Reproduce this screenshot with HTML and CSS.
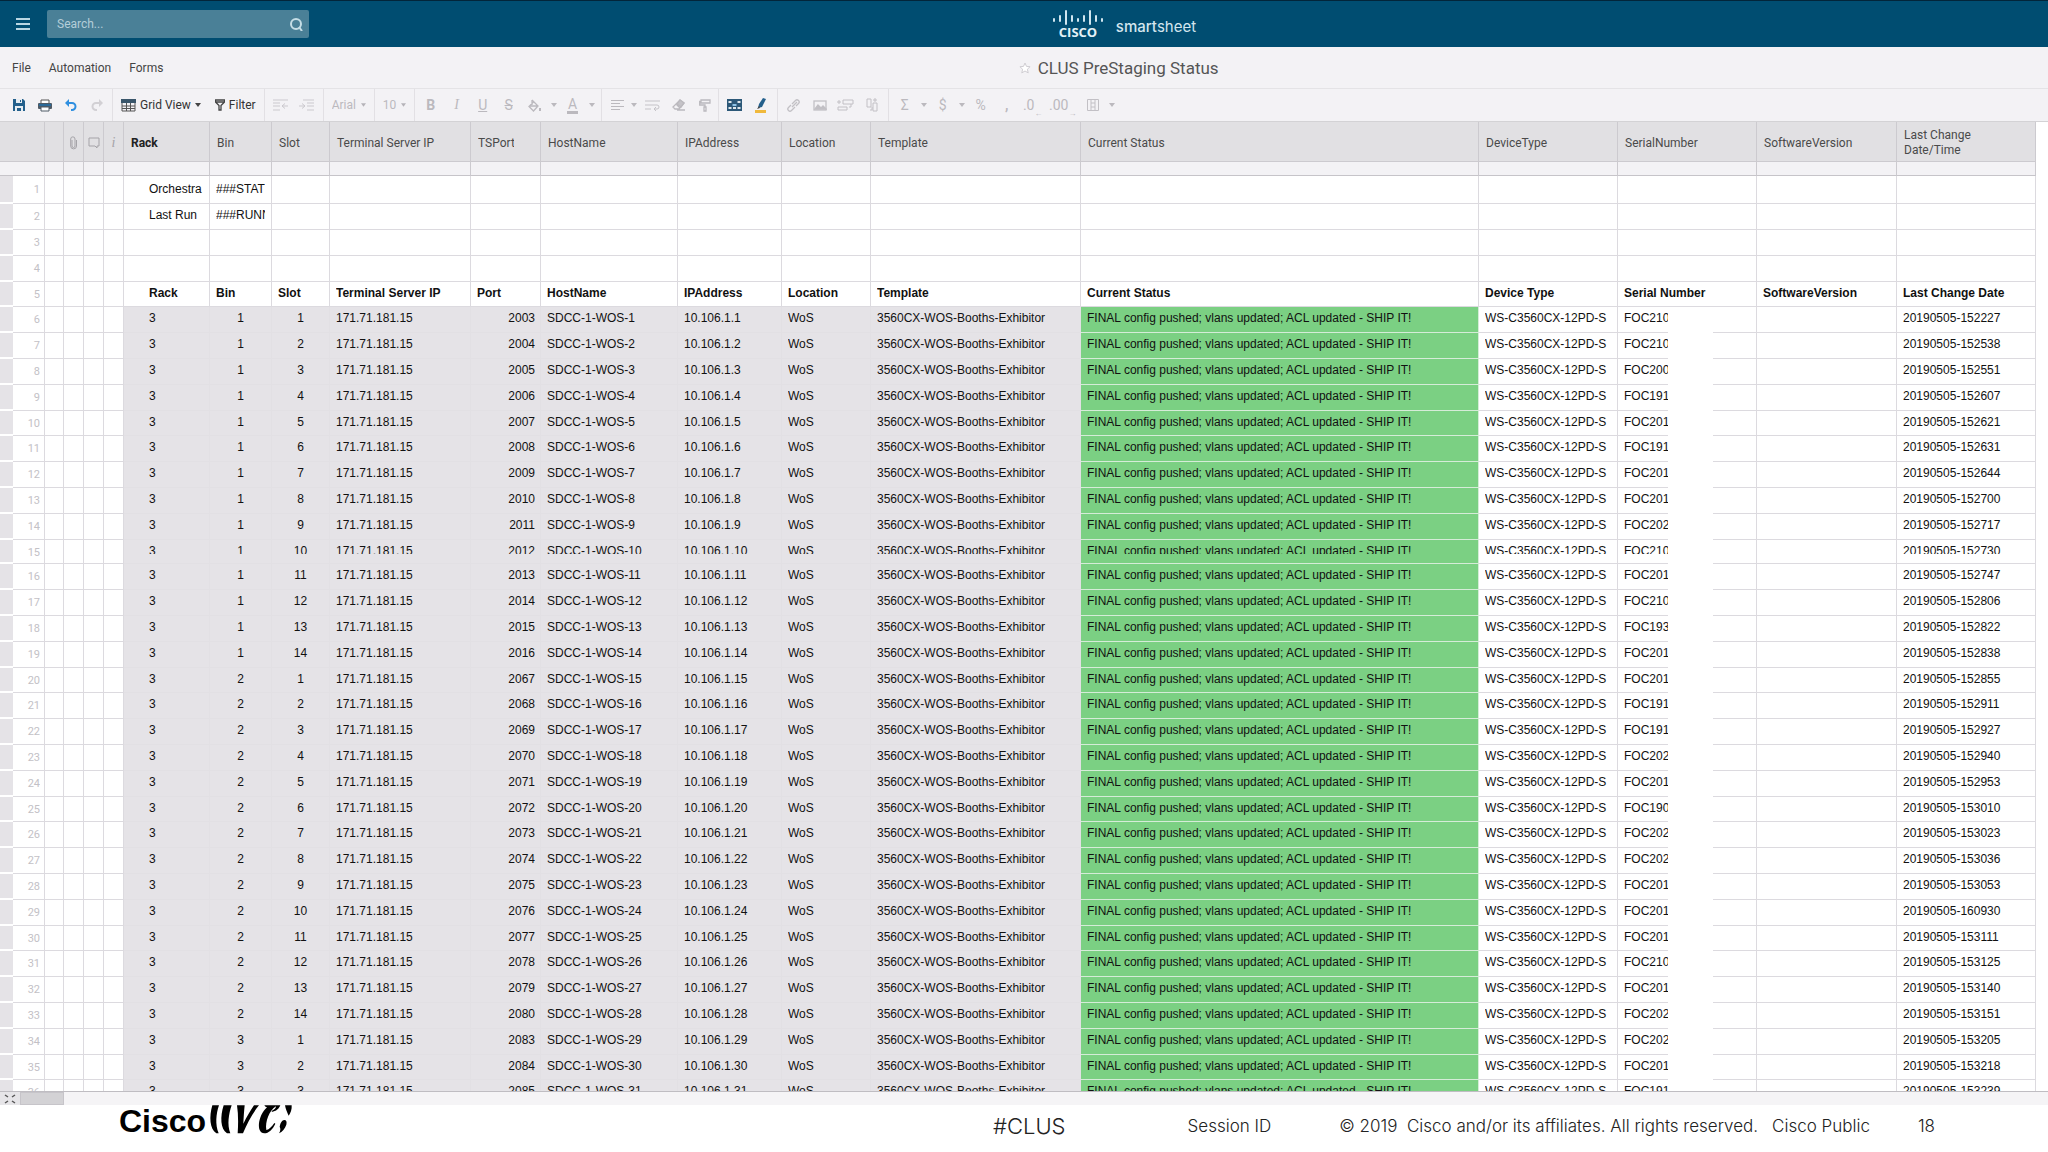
FILE: index.html
```
<!DOCTYPE html>
<html lang="en">
<head>
  <meta charset="UTF-8">
  <title>CLUS PreStaging Status</title>
  <meta name="viewport" content="width=device-width, initial-scale=1.0">
  <link rel="stylesheet" href="styles.css">
</head>
<body>
  <header class="topbar">
    <button class="menu-btn" aria-label="Menu">
      <svg width="14" height="12" viewBox="0 0 14 12"><path d="M0 1h14M0 6h14M0 11h14" stroke="#b9d6e2" stroke-width="2"/></svg>
    </button>
    <div class="search">
      <input type="text" placeholder="Search..." aria-label="Search">
      <svg width="13" height="13" viewBox="0 0 13 13" fill="none" stroke="#c5dde6" stroke-width="2"><circle cx="6" cy="6" r="5"/><path d="M9 9l3 4"/></svg>
    </div>
    <div class="brand">
      <svg class="cisco" width="50" height="30" viewBox="0 0 50 30">
        <g stroke="#cfe6f0" stroke-width="2" stroke-linecap="round">
          <path d="M1 10v2M7 7v5M13 2v13M19 7v5M25 10v2M31 7v5M37 2v13M43 7v5M49 10v2"/>
        </g>
        <text x="25" y="28" text-anchor="middle">CISCO</text>
      </svg>
      <span class="smart"><b>smart</b>sheet</span>
    </div>
  </header>

  <div class="titlebar">
    <nav class="menus">
      <a href="#">File</a>
      <a href="#">Automation</a>
      <a href="#">Forms</a>
    </nav>
    <h1>
      <svg width="12" height="12" viewBox="0 0 12 12" fill="#fff" stroke="#cfcdd2"><path d="M6 1l1.5 3.4 3.6.3-2.7 2.5.8 3.7L6 9 2.800 10.900l.8-3.700L.9 4.700l3.600-.3z"/></svg>
      CLUS PreStaging Status
    </h1>
  </div>

  <div class="toolbar">
    <div class="group first">
      <button class="tool" aria-label="Save"><svg width="12" height="12" viewBox="0 0 12 12"><path d="M0 0h10l2 2v10H0z" fill="#24608c"/><path d="M3 0h6v4H3zM2 7h8v5H2z" fill="#e8eef3"/><path d="M7 1h1v2H7zM4 9h4v3H4z" fill="#24608c"/></svg></button>
      <button class="tool" aria-label="Print"><svg width="14" height="13" viewBox="0 0 14 13"><path d="M3 4V1h8v3" fill="#fff" stroke="#555"/><rect y="4" width="14" height="6" rx="1" fill="#4f5b66"/><path d="M1 6h12" stroke="#2b6a99" stroke-width="2"/><path d="M3 8h8v4H3z" fill="#fff" stroke="#4f5b66"/></svg></button>
      <button class="tool" aria-label="Undo"><svg width="12" height="12" viewBox="0 0 12 12"><path d="M0 4l4-4v8z" fill="#2f8fe0"/><path d="M3 4h4a3 3 0 0 1 0 7H6" fill="none" stroke="#2f8fe0" stroke-width="2"/></svg></button>
      <button class="tool" aria-label="Redo"><svg width="12" height="12" viewBox="0 0 12 12"><path d="M12 4L8 0v8z" fill="#d2d0d4"/><path d="M9 4H5a3 3 0 0 0 0 7h1" fill="none" stroke="#d2d0d4" stroke-width="2"/></svg></button>
    </div>
    <div class="group padded">
      <button class="labelled">
        <svg width="15" height="13" viewBox="0 0 15 13"><path d="M1 4v8h13V4M1 7h13M1 9.500h13M5.500 3v9M9.500 3v9" fill="none" stroke="#555"/><path d="M0 0h15v4H0z" fill="#3a566b"/></svg>
        Grid View
        <svg width="6" height="4" viewBox="0 0 6 4"><path d="M0 0h6L3 4z" fill="#444"/></svg>
      </button>
      <button class="labelled">
        <svg width="10" height="12" viewBox="0 0 10 12"><path d="M.5 1h9v2L6 6.500V11H4V6.500L.5 3zM1 3h8" fill="none" stroke="#444" stroke-width="1.300"/></svg>
        Filter
      </button>
    </div>
    <div class="group">
      <button class="tool" aria-label="Outdent"><svg width="15" height="12" viewBox="0 0 15 12" stroke="#cbc9ce"><path d="M0 1h15M0 4h7M0 7h7M0 11h7M9 7h6M12 4.500L9 7l3 2.500" fill="none"/></svg></button>
      <button class="tool" aria-label="Indent"><svg width="15" height="12" viewBox="0 0 15 12" stroke="#cbc9ce"><path d="M4 1h11M8 4h7M8 7h7M8 11h7M0 7h6M3 4.500L6 7 3 9.500" fill="none"/></svg></button>
    </div>
    <div class="group padded">
      <label class="pick"><select class="font" aria-label="Font"><option>Arial</option></select><svg width="5" height="4" viewBox="0 0 6 4"><path d="M0 0h6L3 4z" fill="#b5b3b8"/></svg></label>
    </div>
    <div class="group padded">
      <label class="pick"><select class="size" aria-label="Font size"><option>10</option></select><svg width="5" height="4" viewBox="0 0 6 4"><path d="M0 0h6L3 4z" fill="#b5b3b8"/></svg></label>
    </div>
    <div class="group">
      <button class="tool"><b>B</b></button>
      <button class="tool"><i class="serif">I</i></button>
      <button class="tool"><u>U</u></button>
      <button class="tool"><s>S</s></button>
      <button class="tool" aria-label="Fill colour"><svg width="13" height="13" viewBox="0 0 13 13" fill="none" stroke="#bbb9be" stroke-width="1.300"><path d="M4 1l6 6-4.500 5L1 7.500 5.500 3M4 1v5M2 7h7"/><path d="M12 9v3" stroke-width="2"/></svg></button>
      <button class="drop" aria-label="Fill colours"></button>
      <button class="tool" aria-label="Text colour"><span class="textcolor">A</span></button>
      <button class="drop" aria-label="Text colours"></button>
    </div>
    <div class="group align">
      <button class="tool small" aria-label="Align"><svg width="13" height="11" viewBox="0 0 13 11" stroke="#bbb9be"><path d="M0 .5h13M0 3.500h9M0 6.500h13M0 9.500h9"/></svg></button>
      <button class="drop" aria-label="Alignments"></button>
      <button class="tool" aria-label="Wrap"><svg width="15" height="11" viewBox="0 0 15 11" fill="none" stroke="#c5c3c8"><path d="M0 1h15M0 5h12a2 2 0 0 1 0 4H9M11 7L9 9l2 2M0 9h6"/></svg></button>
      <button class="tool" aria-label="Clear formats"><svg width="13" height="12" viewBox="0 0 13 12" fill="none" stroke="#bbb9be" stroke-width="1.300"><path d="M8 1l4 3-5 6H3L1 8zM4 5l4 4M5 11h8"/><path d="M8 1l4 3-3 4-4-3z" fill="#c5c3c8"/></svg></button>
      <button class="tool" aria-label="Format painter"><svg width="12" height="13" viewBox="0 0 12 13" fill="none" stroke="#bbb9be" stroke-width="1.300"><path d="M2 1h9v3H2zM2 2.500H.7V6H6v2M5 8h2v4H5z"/></svg></button>
    </div>
    <div class="group">
      <button class="tool" aria-label="Highlight changes"><svg width="15" height="12" viewBox="0 0 15 12"><path d="M0 0h15v12H0z" fill="#2c5878"/><path d="M1.500 2h3v2h-3zM10.500 2h3v2h-3zM1.500 8h3v2h-3zM6 8h3v2H6zM10.500 8h3v2h-3z" fill="#dfe7ec"/><path d="M5.500 5h4v2h-4z" fill="#8fc3e6"/></svg></button>
      <button class="tool" aria-label="Highlighter"><svg width="13" height="16" viewBox="0 0 13 16"><path d="M9 1l3 1-4 8-4 1 1-4z" fill="#24608c"/><path d="M3 12l2-3 1 2z" fill="#444"/><path d="M1 13h11v3H1z" fill="#f0b93c"/></svg></button>
    </div>
    <div class="group">
      <button class="tool" aria-label="Link"><svg width="13" height="13" viewBox="0 0 13 13" fill="none" stroke="#c2c0c5" stroke-width="1.300"><path d="M5 8l5-5M4 6L1.500 8.500a2 2 0 0 0 3 3L8 8M5 5l3.500-3.500a2 2 0 0 1 3 3L9 7"/></svg></button>
      <button class="tool" aria-label="Image"><svg width="14" height="11" viewBox="0 0 14 11" fill="none" stroke="#c2c0c5" stroke-width="1.300"><rect x="1" y="1" width="12" height="9"/><path d="M2 9l3-4 3 3 2-2 3 3z" fill="#c2c0c5"/></svg></button>
      <button class="tool" aria-label="Insert row"><svg width="17" height="12" viewBox="0 0 17 12" fill="none" stroke="#c2c0c5"><path d="M6 1h10v4H6zM1 8h9v3H1zM0 3h4M2 1v4M12 8h2V5"/></svg></button>
      <button class="tool" aria-label="Insert column"><svg width="12" height="14" viewBox="0 0 12 14" fill="none" stroke="#c2c0c5"><path d="M1 1h4v8H1zM7 5h4v8H7zM9 0v4M7 2h4M4 12h2V9"/></svg></button>
    </div>
    <div class="group numbers">
      <button class="tool">Σ</button>
      <button class="drop" aria-label="Functions"></button>
      <button class="tool">$</button>
      <button class="drop" aria-label="Currencies"></button>
      <button class="tool">%</button>
      <button class="tool"><b>,</b></button>
      <button class="tool">.0<sub>←</sub></button>
      <button class="tool wide">.00<sub>→</sub></button>
      <button class="tool" aria-label="Columns"><svg width="12" height="12" viewBox="0 0 12 12" fill="none" stroke="#c2c0c5"><path d="M.5 .5h11v11H.5zM4 1v10M8 1v10M4 4h4M4 8h4"/></svg></button>
      <button class="drop" aria-label="Column options"></button>
    </div>
  </div>

  <main class="sheet">
    <table>
      <colgroup>
        <col class="c-grip"><col class="c-num"><col class="c-flag"><col class="c-icon"><col class="c-icon"><col class="c-icon">
        <col class="c-rack"><col class="c-bin"><col class="c-slot"><col class="c-ts"><col class="c-port"><col class="c-host">
        <col class="c-ip"><col class="c-loc"><col class="c-tmpl"><col><col class="c-dev"><col class="c-serial"><col class="c-soft"><col class="c-date">
      </colgroup>
      <thead>
        <tr class="names">
          <th colspan="2"></th>
          <th></th>
          <th class="icon"><svg width="7" height="14" viewBox="0 0 7 14" fill="none" stroke="#a5a3a8"><path d="M2 4v6a1.500 1.500 0 0 0 3 0V3a2 2 0 0 0-4.300 0v7a2.800 2.800 0 0 0 5.800 0V4"/></svg></th>
          <th class="icon"><svg width="12" height="12" viewBox="0 0 12 12" fill="none" stroke="#a5a3a8"><path d="M1 1h10v8H9v2L7 9H1z"/></svg></th>
          <th class="icon"><i>i</i></th>
          <th class="primary">Rack</th>
          <th>Bin</th>
          <th>Slot</th>
          <th>Terminal Server IP</th>
          <th class="tight"><span>TSPort</span></th>
          <th>HostName</th>
          <th>IPAddress</th>
          <th>Location</th>
          <th>Template</th>
          <th>Current Status</th>
          <th>DeviceType</th>
          <th>SerialNumber</th>
          <th>SoftwareVersion</th>
          <th>Last Change<br>Date/Time</th>
        </tr>
        <tr class="strip">
          <td colspan="2"></td><td></td><td></td><td></td><td></td><td></td><td></td><td></td><td></td><td></td><td></td><td></td><td></td><td></td><td></td><td></td><td></td><td></td><td></td>
        </tr>
      </thead>
      <tbody id="rows"></tbody>
    </table>
    <div class="redact"></div>
  </main>

  <div class="scroll">
    <button class="expand" aria-label="Expand"><svg width="12" height="10" viewBox="0 0 12 10" stroke="#555" stroke-width="1.500"><path d="M1 1l3 2M11 1L8 3M1 9l3-2M11 9L8 7"/></svg></button>
    <div class="thumb"></div>
  </div>

  <footer>
    <div class="live">
      <span>Cisco</span>
      <svg width="84" height="29" viewBox="298 45 252 87">
        <path d="M308 46h20c-9 26-12 58-1 84h-7c-20-12-22-50-12-84z"/>
        <path d="M342 46h24c-9 26-14 58-4 84h-10c-20-12-21-50-10-84z"/>
        <path d="M382 46h23c-2 20-3 36-4 55 10-20 22-40 32-55h15c-20 24-36 55-48 84h-16c2-30 2-58-2-84z"/>
        <path d="M464 46h48c-4 10-12 18-26 20l1-4c8-3 12-8 12-13-20 12-33 46-29 71 9-2 17-10 24-21l3 2c-8 17-20 29-33 29-25 0-20-53 8-78-3 0-6-2-8-6z"/>
        <path d="M526 46h20c1 12-3 24-9 31-5-10-9-20-11-31zM518 92c10-5 15 2 12 12-4 12-12 22-22 26 5-9 5-14 2-20 1-8 4-14 8-18z"/>
      </svg>
    </div>
    <span class="tag">#CLUS</span>
    <span class="session">Session ID</span>
    <span class="legal">© 2019&nbsp; Cisco and/or its affiliates. All rights reserved.</span>
    <span class="public">Cisco Public</span>
    <span class="page">18</span>
  </footer>

  <script src="script.js"></script>
</body>
</html>
```

FILE: styles.css
```
:root {
  --bar: #004d71;
  --panel: #f3f2f5;
  --head: #e1e0e3;
  --locked: #e5e3e7;
  --line: #dcdadf;
  --green: #7bd083;
}

* {
  box-sizing: border-box;
}

body {
  margin: 0;
  height: 100vh;
  display: flex;
  flex-direction: column;
  overflow: hidden;
  background: #fff;
  color: #111;
  font-family: Roboto, "Liberation Sans", sans-serif;
  font-size: 12px;
}

button, select, input {
  font: inherit;
  color: inherit;
  background: none;
  border: 0;
  padding: 0;
}

button {
  cursor: pointer;
}

svg {
  flex: none;
  display: block;
}

/* top bar */
.topbar {
  display: flex;
  align-items: center;
  height: 47px;
  flex: none;
  background: var(--bar);
  border-top: 1px solid #02253a;
  padding-left: 16px;
}

.menu-btn {
  margin-right: 17px;
}

.search {
  display: flex;
  align-items: center;
  width: 262px;
  height: 28px;
  padding: 0 6px 0 10px;
  background: #4a8097;
  border-radius: 2px;
}

.search input {
  flex: 1;
  min-width: 0;
  outline: none;
}

.search input::placeholder {
  color: #b4ced9;
  opacity: 1;
}

.brand {
  flex: 1;
  display: flex;
  align-items: center;
  justify-content: center;
  gap: 13px;
  padding-right: 108px;
}

.cisco text {
  font: bold 13px "Open Sans", sans-serif;
  fill: #e3f1f7;
}

.smart {
  color: #d3e6ef;
  font-family: Inter, sans-serif;
  font-size: 15px;
  padding-top: 5px;
}

.smart b {
  font-weight: 500;
}

/* title and menus */
.titlebar {
  display: flex;
  align-items: center;
  flex: none;
  height: 42px;
  background: var(--panel);
  border-bottom: 1px solid #e4e3e6;
  padding-left: 12px;
}

.menus {
  display: flex;
  gap: 18px;
}

.menus a {
  color: #444;
  text-decoration: none;
}

h1 {
  flex: 1;
  display: flex;
  align-items: center;
  justify-content: center;
  gap: 7px;
  margin: 0;
  padding-left: 26px;
  color: #555;
  font-size: 17px;
  font-weight: 400;
}

/* toolbar */
.toolbar {
  display: flex;
  flex: none;
  height: 33px;
  background: var(--panel);
  border-bottom: 1px solid #d3d2d5;
  color: #bbb9be;
}

.group {
  display: flex;
  align-items: center;
  padding: 0 3px;
  border-right: 1px solid #e2e0e4;
}

.group.first {
  padding: 0 2px 0 6px;
}

.group.padded {
  gap: 14px;
  padding: 0 8px;
}

.group.align {
  padding: 0 0 0 6px;
}

.group.numbers {
  border-right: 0;
}

.tool {
  display: flex;
  align-items: center;
  justify-content: center;
  width: 26px;
  height: 26px;
  font-size: 14px;
}

.tool.small {
  width: 20px;
}

.tool.wide {
  width: 34px;
}

.tool sub {
  font-size: 8px;
  align-self: flex-end;
}

.serif {
  font-family: "Liberation Serif", serif;
}

.textcolor {
  line-height: 14px;
  border-bottom: 3px solid #bbb9be;
  padding: 0 1px;
}

.drop {
  display: flex;
  justify-content: center;
  width: 12px;
}

.drop::before {
  content: "";
  border: 3px solid transparent;
  border-top: 4px solid #bbb9be;
  border-bottom: 0;
}

.labelled {
  display: flex;
  align-items: center;
  gap: 4px;
  color: #333;
}

.pick {
  display: flex;
  align-items: center;
  gap: 3px;
}

.pick select {
  appearance: none;
  color: #bbb9be;
}

.font {
  width: 26px;
}

.size {
  width: 15px;
}

/* sheet */
.sheet {
  position: relative;
  flex: 1;
  min-height: 0;
  overflow: hidden;
  border-bottom: 1px solid #bfbdc2;
}

table {
  width: calc(100% - 12px);
  min-width: 1700px;
  table-layout: fixed;
  border-collapse: separate;
  border-spacing: 0;
}

.c-grip { width: 13px; }
.c-num { width: 32px; }
.c-flag { width: 19px; }
.c-icon { width: 20px; }
.c-rack { width: 86px; }
.c-bin { width: 62px; }
.c-slot { width: 58px; }
.c-ts { width: 141px; }
.c-port { width: 70px; }
.c-host { width: 137px; }
.c-ip { width: 104px; }
.c-loc { width: 89px; }
.c-tmpl { width: 210px; }
.c-dev { width: 139px; }
.c-serial { width: 139px; }
.c-soft { width: 140px; }
.c-date { width: 139px; }

th, td {
  padding: 0;
  border-right: 1px solid var(--line);
  border-bottom: 1px solid var(--line);
}

th {
  height: 40px;
  padding: 3px 7px 0;
  background: var(--head);
  border-color: #cccacf;
  color: #4a4a4a;
  font-size: 12px;
  font-weight: 400;
  line-height: 15px;
  text-align: left;
  white-space: nowrap;
}

th.primary {
  color: #222;
  font-weight: 700;
}

th.icon {
  padding: 3px 0 0;
  text-align: center;
}

th.icon svg {
  margin: 0 auto;
}

th i {
  color: #a5a3a8;
  font-family: "Liberation Serif", serif;
  font-size: 14px;
}

th.tight {
  padding-right: 26px;
}

th.tight span {
  display: block;
  overflow: hidden;
}

.strip td {
  height: 14px;
  background: var(--panel);
  border-color: #cccacf;
  border-bottom: 1px solid #c6c4c9;
}

tbody td {
  height: 26px;
  padding: 4px 6px 0;
  vertical-align: top;
  font-family: "Liberation Sans", Arial, sans-serif;
  font-size: 12px;
  line-height: 14px;
  white-space: nowrap;
}

tbody tr:nth-child(5n) td {
  height: 25px;
}

tbody tr:first-child td {
  height: 28px;
  padding-top: 6px;
}

tbody td span {
  display: block;
  overflow: hidden;
}

tbody td.grip {
  padding: 0;
  background: var(--locked);
  border-right: 0;
  border-bottom: 2px solid #fff;
}

tbody td.num {
  padding: 6px 4px 0 0;
  color: #c3c1c6;
  font-family: Roboto, sans-serif;
  font-size: 11px;
  text-align: right;
}

tbody tr:first-child td.num {
  padding-top: 7px;
}

td.rack {
  padding-left: 25px;
}

.data .rack, .data .locked {
  background: var(--locked);
  border-color: #e2e0e4;
}

.data .mid {
  text-align: center;
}

.data .port {
  padding-right: 5px;
  text-align: right;
}

.data .status {
  background: var(--green);
  border-color: #d5ecd8;
}

.data .serial span {
  width: 45px;
}

.heading td {
  font-weight: 700;
}

.heading td.num {
  font-weight: 400;
}

/* row where two captured screens join */
tbody tr.seam td {
  height: 24px;
}

.seam td span {
  height: 10px;
}

/* hides the rest of the serial numbers */
.redact {
  position: absolute;
  top: 186px;
  right: 335px;
  bottom: 0;
  width: 45px;
  background: #fff;
}

.scroll {
  display: flex;
  flex: none;
  height: 13px;
  background: #f5f4f6;
}

.expand {
  display: flex;
  align-items: center;
  justify-content: center;
  width: 20px;
  background: #e6e5e8;
}

.thumb {
  width: 44px;
  background: #d3d2d5;
  border: 1px solid #c6c4c9;
}

/* footer */
footer {
  display: flex;
  align-items: center;
  flex: none;
  height: 47px;
  padding: 0 113px 6px 119px;
  color: #222;
  font-family: Inter, sans-serif;
  font-size: 17px;
  font-weight: 300;
}

.live {
  display: flex;
  align-items: flex-start;
  align-self: flex-start;
  gap: 3px;
  color: #000;
  font: bold 32px/32px "Liberation Sans", Arial, sans-serif;
}

.tag {
  margin-left: auto;
  font-size: 22px;
}

.session {
  margin-left: 122px;
}

.legal {
  margin-left: 68px;
}

.public {
  margin-left: 14px;
}

.page {
  margin-left: 48px;
}
```

FILE: script.js
```
const body = document.getElementById("rows");

// serial prefix and last change time, one pair per switch
const switches = [
  ["FOC210", "152227"], ["FOC210", "152538"], ["FOC200", "152551"], ["FOC191", "152607"],
  ["FOC201", "152621"], ["FOC191", "152631"], ["FOC201", "152644"], ["FOC201", "152700"],
  ["FOC202", "152717"], ["FOC210", "152730"], ["FOC201", "152747"], ["FOC210", "152806"],
  ["FOC193", "152822"], ["FOC201", "152838"], ["FOC201", "152855"], ["FOC191", "152911"],
  ["FOC191", "152927"], ["FOC202", "152940"], ["FOC201", "152953"], ["FOC190", "153010"],
  ["FOC202", "153023"], ["FOC202", "153036"], ["FOC201", "153053"], ["FOC201", "160930"],
  ["FOC201", "153111"], ["FOC210", "153125"], ["FOC201", "153140"], ["FOC202", "153151"],
  ["FOC202", "153205"], ["FOC201", "153218"], ["FOC191", "153239"]
];

const firstPort = [2003, 2067, 2083];

const classes = ["rack", "locked mid", "locked mid", "locked", "locked port", "locked", "locked",
  "locked", "locked", "status", "device", "serial", "", ""];

let count = 0;

function addRow(cells, type) {
  count++;
  const tr = document.createElement("tr");
  tr.className = type;
  let html = '<td class="grip"></td><td class="num"><span>' + count + "</span></td><td></td><td></td><td></td><td></td>";
  classes.forEach((name, i) => {
    html += '<td class="' + name + '"><span>' + (cells[i] || "") + "</span></td>";
  });
  tr.innerHTML = html;
  body.appendChild(tr);
}

addRow(["Orchestra", "###STAT"], "");
addRow(["Last Run", "###RUNN"], "");
addRow([], "");
addRow([], "");
addRow(["Rack", "Bin", "Slot", "Terminal Server IP", "Port", "HostName", "IPAddress", "Location",
  "Template", "Current Status", "Device Type", "Serial Number", "SoftwareVersion", "Last Change Date"], "heading");

switches.forEach(([serial, time], i) => {
  const bin = Math.floor(i / 14);
  const slot = i % 14;
  addRow([3, bin + 1, slot + 1, "171.71.181.15", firstPort[bin] + slot, "SDCC-1-WOS-" + (i + 1),
    "10.106.1." + (i + 1), "WoS", "3560CX-WOS-Booths-Exhibitor",
    "FINAL config pushed; vlans updated; ACL updated - SHIP IT!",
    "WS-C3560CX-12PD-S", serial, "", "20190505-" + time], count === 14 ? "data seam" : "data");
});
```
